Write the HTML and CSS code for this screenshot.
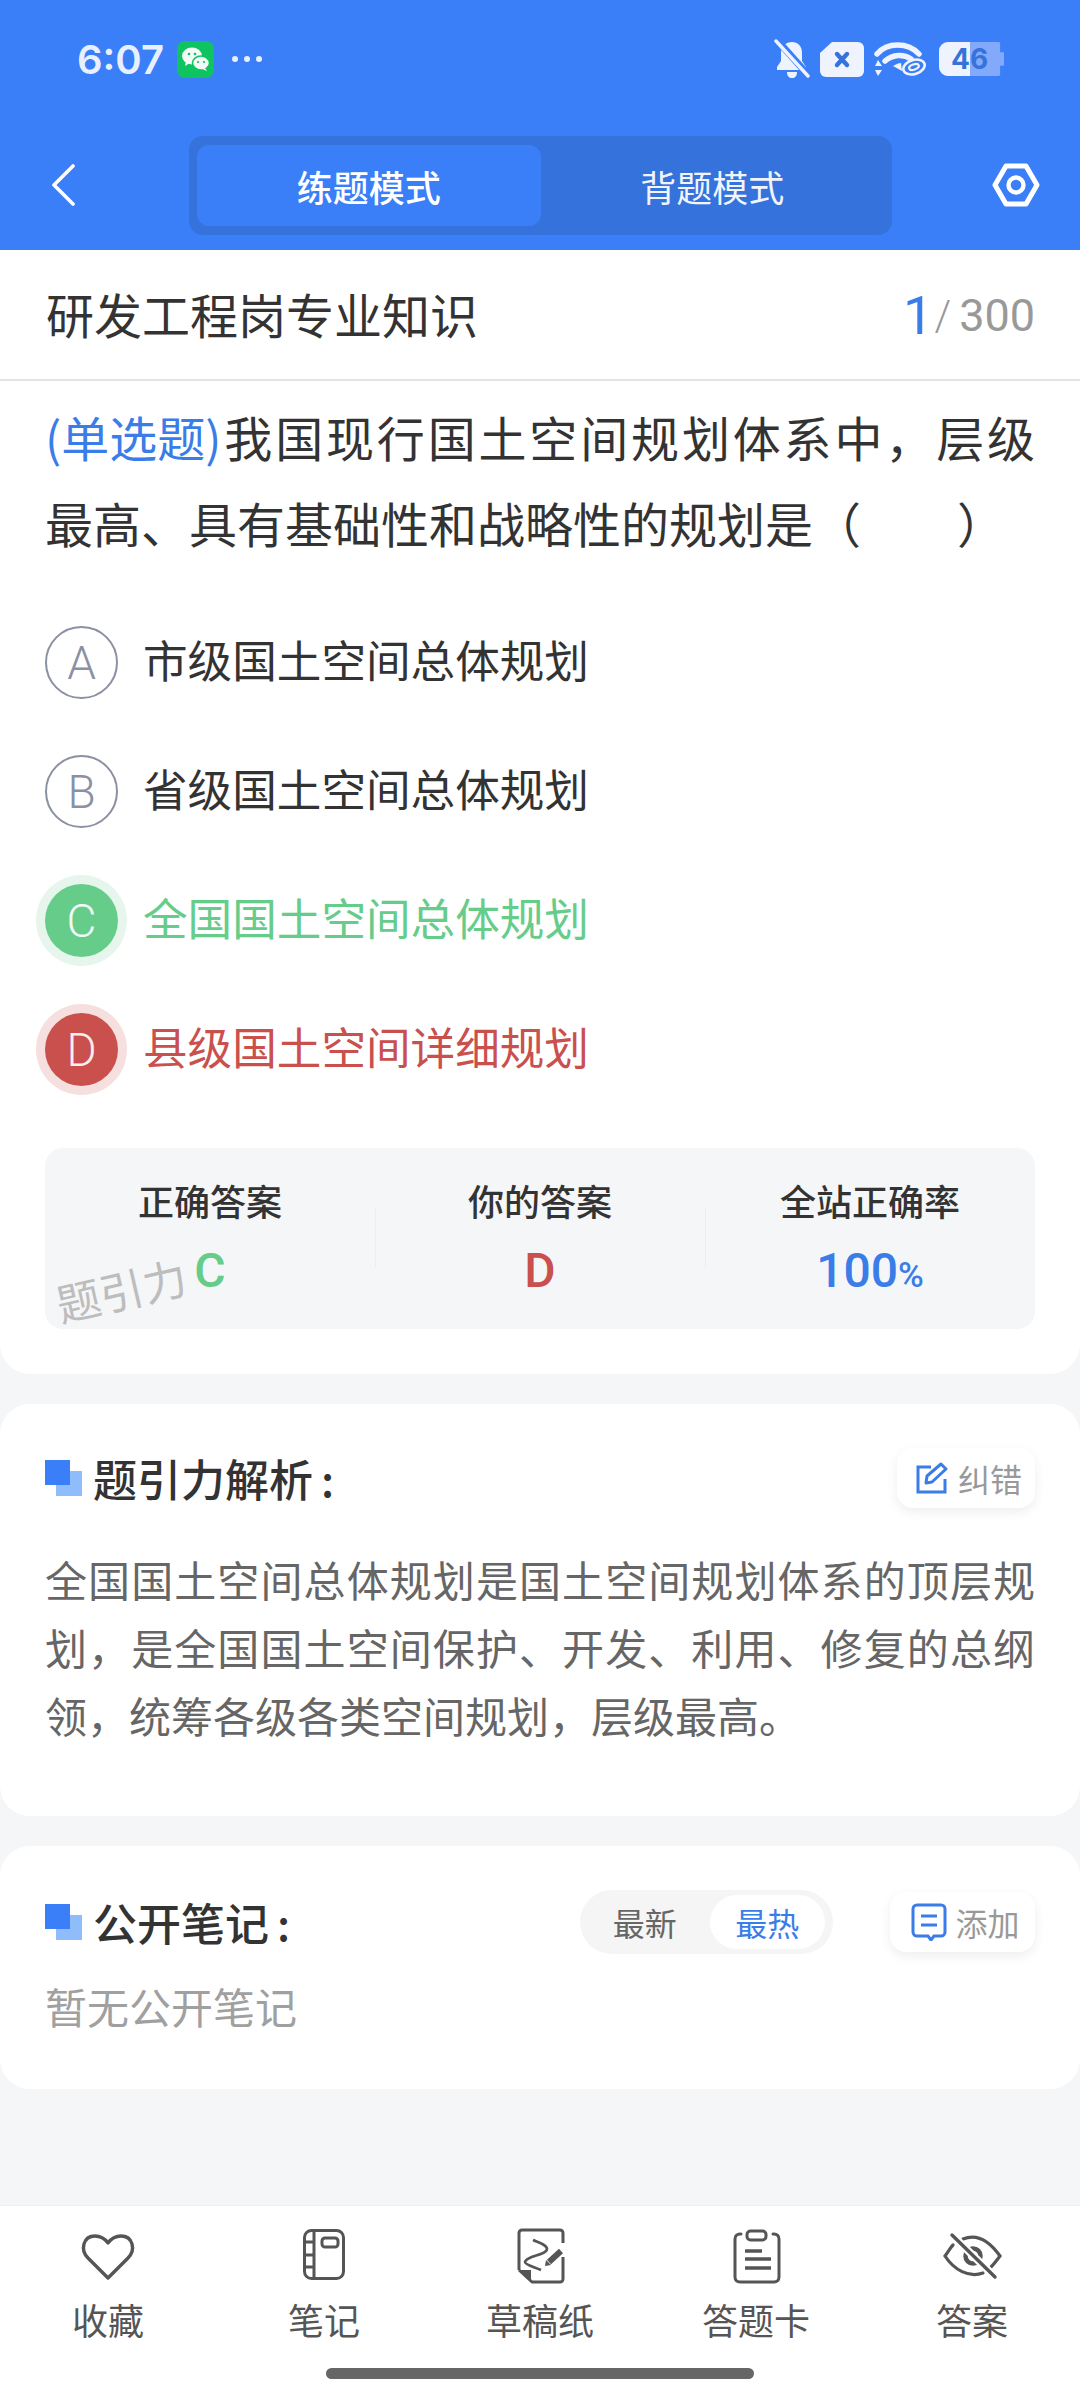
FILE: index.html
```html
<!DOCTYPE html>
<html lang="zh-CN">
<head>
    <meta charset="UTF-8">
    <meta name="viewport" content="width=device-width, initial-scale=1.0">
    <title>练题模式</title>
    <link rel="stylesheet" href="styles.css">
</head>
<body>
    <header class="top">
        <div class="status">
            <div class="status-left">
                <span class="time">6:07</span>
                <svg class="wechat" width="37" height="37" viewBox="0 0 37 37">
                    <rect width="37" height="37" rx="8" fill="#0fc460"/>
                    <ellipse cx="15" cy="15" rx="10" ry="8.5" fill="#f2fbf5"/>
                    <path d="M9 20l-1 5 5-3z" fill="#f2fbf5"/>
                    <ellipse cx="24" cy="22" rx="8.5" ry="7" fill="#f2fbf5" stroke="#0fc460" stroke-width="1.5"/>
                    <path d="M28 27l2 3-5-2z" fill="#f2fbf5"/>
                    <circle cx="12" cy="13" r="1.3" fill="#0fc460"/>
                    <circle cx="18" cy="13" r="1.3" fill="#0fc460"/>
                    <circle cx="21" cy="21" r="1.1" fill="#0fc460"/>
                    <circle cx="27" cy="21" r="1.1" fill="#0fc460"/>
                </svg>
                <div class="dots"><i></i><i></i><i></i></div>
            </div>
            <div class="status-right">
                <svg width="36" height="40" viewBox="0 0 36 40">
                    <path d="M18 3c6 0 10 4 10 11v8l4 6v3H3v-3l4-6v-8c0-7 5-11 11-11z" fill="#eef3fe"/>
                    <path d="M13 33h10c0 4-2 6-5 6s-5-2-5-6z" fill="#eef3fe"/>
                    <path d="M3 1l32 36" stroke="#3b7ff8" stroke-width="7"/>
                    <path d="M2 2l32 35" stroke="#eef3fe" stroke-width="3.4" stroke-linecap="round"/>
                </svg>
                <svg width="44" height="35" viewBox="0 0 44 35">
                    <path d="M12 0h26a6 6 0 0 1 6 6v23a6 6 0 0 1-6 6H6a6 6 0 0 1-6-6V11z" fill="#eef3fe"/>
                    <path d="M17 12l10 11M27 12L17 23" stroke="#3572dc" stroke-width="4.4" stroke-linecap="round"/>
                </svg>
                <svg width="52" height="36" viewBox="0 0 52 36">
                    <path d="M3 13C13 1 34 1 45 13" fill="none" stroke="#eef3fe" stroke-width="5.5" stroke-linecap="round"/>
                    <path d="M11 20c8-7 19-7 26-2" fill="none" stroke="#eef3fe" stroke-width="5.5" stroke-linecap="round"/>
                    <path d="M19 25c3-2 6-3 8-3l1 8z" fill="#eef3fe"/>
                    <path d="M4 19l4 6H1zM4 35l4-6H1z" fill="#eef3fe"/>
                    <ellipse cx="40" cy="26" rx="11" ry="7" transform="rotate(-18 40 26)" fill="none" stroke="#eef3fe" stroke-width="2.6"/>
                    <ellipse cx="40" cy="26" rx="5" ry="2.6" transform="rotate(-18 40 26)" fill="none" stroke="#eef3fe" stroke-width="2.2"/>
                </svg>
                <div class="battery">
                    <div class="battery-fill"></div>
                    <span class="battery-num">46</span>
                </div>
            </div>
        </div>
        <nav class="nav">
            <svg class="back" width="24" height="42" viewBox="0 0 24 42">
                <path d="M22 2L3 21l19 19" fill="none" stroke="#fff" stroke-width="3.6" stroke-linecap="round" stroke-linejoin="round"/>
            </svg>
            <div class="mode-tabs">
                <div class="mode-tab active">练题模式</div>
                <div class="mode-tab">背题模式</div>
            </div>
            <svg class="setting" width="48" height="44" viewBox="0 0 48 44">
                <path d="M14 3h20l11 19-11 19H14L3 22z" fill="none" stroke="#fff" stroke-width="5" stroke-linejoin="round"/>
                <circle cx="24" cy="22" r="7.5" fill="none" stroke="#fff" stroke-width="4.4"/>
            </svg>
        </nav>
    </header>

    <main class="page">
        <section class="card card-question">
            <div class="paper-row">
                <h1 class="paper-title">研发工程岗专业知识</h1>
                <div class="paper-count">
                    <span class="count-now">1</span>
                    <span class="count-slash">/</span>
                    <span class="count-all">300</span>
                </div>
            </div>
            <div class="question-body">
                <p class="question"><span class="q-type">(单选题)</span>我国现行国土空间规划体系中，层级最高、具有基础性和战略性的规划是（　　）</p>
                <div class="options">
                    <div class="option"><span class="opt-mark">A</span><span class="opt-text">市级国土空间总体规划</span></div>
                    <div class="option"><span class="opt-mark">B</span><span class="opt-text">省级国土空间总体规划</span></div>
                    <div class="option right"><span class="opt-mark">C</span><span class="opt-text">全国国土空间总体规划</span></div>
                    <div class="option wrong"><span class="opt-mark">D</span><span class="opt-text">县级国土空间详细规划</span></div>
                </div>
                <div class="answer-box">
                    <div class="answer-col">
                        <div class="answer-label">正确答案</div>
                        <div class="answer-value green">C</div>
                    </div>
                    <div class="answer-col">
                        <div class="answer-label">你的答案</div>
                        <div class="answer-value red">D</div>
                    </div>
                    <div class="answer-col">
                        <div class="answer-label">全站正确率</div>
                        <div class="answer-value blue">100<small>%</small></div>
                    </div>
                    <div class="watermark">题引力</div>
                </div>
            </div>
        </section>

        <section class="card card-analysis">
            <div class="card-head">
                <h2 class="card-title"><span class="title-mark"></span>题引力解析<span class="title-colon">:</span></h2>
                <div class="mini-btn">
                    <svg width="34" height="32" viewBox="0 0 34 32">
                        <path d="M15 5H2v25h27V17" fill="none" stroke="#3b7de8" stroke-width="3"/>
                        <path d="M11 14L25 2l5 5-14 13-6 1z" fill="none" stroke="#3b7de8" stroke-width="3" stroke-linejoin="round"/>
                    </svg>
                    <span>纠错</span>
                </div>
            </div>
            <p class="analysis-text">全国国土空间总体规划是国土空间规划体系的顶层规划，是全国国土空间保护、开发、利用、修复的总纲领，统筹各级各类空间规划，层级最高。</p>
        </section>

        <section class="card card-notes">
            <div class="card-head">
                <h2 class="card-title"><span class="title-mark"></span>公开笔记<span class="title-colon">:</span></h2>
                <div class="notes-tools">
                    <div class="sort-switch">
                        <span class="sort-item">最新</span>
                        <span class="sort-item active">最热</span>
                    </div>
                    <div class="mini-btn">
                        <svg width="36" height="38" viewBox="0 0 36 38">
                            <path d="M6 2h24a4 4 0 0 1 4 4v23a4 4 0 0 1-4 4h-7l-3 4-3-4H6a4 4 0 0 1-4-4V6a4 4 0 0 1 4-4z" fill="none" stroke="#3b7de8" stroke-width="3"/>
                            <path d="M10 13h16M10 22h16" stroke="#3b7de8" stroke-width="3"/>
                        </svg>
                        <span>添加</span>
                    </div>
                </div>
            </div>
            <p class="notes-empty">暂无公开笔记</p>
        </section>
    </main>

    <footer class="toolbar">
        <div class="tools">
            <div class="tool">
                <svg width="60" height="56" viewBox="0 0 60 56">
                    <path d="M30 50L10 30C2 22 5 8 17 8c6 0 10 3 13 7 3-4 7-7 13-7 12 0 15 14 7 22z" fill="none" stroke="#555" stroke-width="3.4" stroke-linejoin="round"/>
                </svg>
                <span>收藏</span>
            </div>
            <div class="tool">
                <svg width="60" height="56" viewBox="0 0 60 56">
                    <rect x="10.5" y="2.5" width="39" height="48" rx="7" fill="none" stroke="#555" stroke-width="3"/>
                    <path d="M20 2.5v48M10.5 14h9.5M10.5 27h9.5M10.5 39h9.5" stroke="#555" stroke-width="3"/>
                    <rect x="28" y="10" width="16" height="9" rx="3" fill="none" stroke="#555" stroke-width="3"/>
                </svg>
                <span>笔记</span>
            </div>
            <div class="tool">
                <svg width="60" height="56" viewBox="0 0 60 56">
                    <path d="M9 42V5a3 3 0 0 1 3-3h38a3 3 0 0 1 3 3v10M53 29v22a3 3 0 0 1-3 3H22L9 42" fill="none" stroke="#555" stroke-width="3" stroke-linejoin="round"/>
                    <path d="M9 42h12v12z" fill="#555"/>
                    <path d="M23 12c7 3 14 5 14 9 0 6-21 7-22 13 0 3 10 5 16 8" fill="none" stroke="#555" stroke-width="2.6"/>
                    <path d="M39 34l12-11" stroke="#555" stroke-width="6"/>
                    <path d="M35 38l1-6 5 5z" fill="#555"/>
                </svg>
                <span>草稿纸</span>
            </div>
            <div class="tool">
                <svg width="60" height="56" viewBox="0 0 60 56">
                    <path d="M15 6h-1c-3 0-5 2-5 5v38c0 3 2 5 5 5h34c3 0 5-2 5-5V11c0-3-2-5-5-5h-1" fill="none" stroke="#555" stroke-width="3" stroke-linecap="round"/>
                    <rect x="21" y="3" width="19" height="9" rx="3.5" fill="none" stroke="#555" stroke-width="3"/>
                    <path d="M19 23h17M19 31h26M19 40h26" stroke="#555" stroke-width="3.6"/>
                </svg>
                <span>答题卡</span>
            </div>
            <div class="tool">
                <svg width="60" height="56" viewBox="0 0 60 56">
                    <path d="M21 11c12-5 25 0 37 17-3 4-6 8-9 11M11 17c-3 3-5 7-8 11 9 14 24 22 38 17" fill="none" stroke="#555" stroke-width="3.2" stroke-linecap="round"/>
                    <circle cx="31" cy="28" r="7.5" fill="none" stroke="#555" stroke-width="4.5"/>
                    <path d="M10 7l43 42" stroke="#fff" stroke-width="8"/>
                    <path d="M10 7l43 42" stroke="#555" stroke-width="3.4" stroke-linecap="round"/>
                </svg>
                <span>答案</span>
            </div>
        </div>
        <div class="home-bar"></div>
    </footer>
</body>
</html>
```

FILE: styles.css
```css
* {
    box-sizing: border-box;
}

html, body {
    margin: 0;
    padding: 0;
}

body {
    width: 1080px;
    height: 2400px;
    display: flex;
    flex-direction: column;
    overflow: hidden;
    background-color: #f5f6f8;
    color: #333;
    font-family: "Noto Sans CJK SC", "Noto Sans", sans-serif;
}

h1, h2, p {
    margin: 0;
    font-weight: 400;
}

/* Header */
.top {
    height: 250px;
    background-color: #3b7ff8;
    color: #fff;
}

.status {
    height: 136px;
    padding: 40px 76px 0 77px;
    display: flex;
    align-items: flex-start;
    justify-content: space-between;
}

.status-left,
.status-right {
    display: flex;
    align-items: center;
    height: 38px;
}

.time {
    font-family: Inter, Roboto, sans-serif;
    font-size: 40px;
    font-weight: 600;
    color: #e8effe;
    width: 100px;
}

.dots {
    display: flex;
    gap: 6px;
    margin-left: 18px;
}

.dots i {
    width: 6px;
    height: 6px;
    border-radius: 50%;
    background: #e8effe;
}

.status-right {
    gap: 10px;
}

.battery {
    position: relative;
    width: 65px;
    height: 34px;
    margin-left: 3px;
    border-radius: 9px 6px 6px 9px;
    background: #83aafa;
    overflow: hidden;
    clip-path: polygon(0 0, 94% 0, 94% 30%, 100% 30%, 100% 70%, 94% 70%, 94% 100%, 0 100%);
}

.battery-fill {
    width: 31px;
    height: 100%;
    background: #eef3fe;
}

.battery-num {
    position: absolute;
    left: 12px;
    top: 0;
    font-family: Inter, Roboto, sans-serif;
    font-size: 28px;
    font-weight: 700;
    line-height: 34px;
    color: #3572dc;
}

.nav {
    height: 99px;
    padding: 0 41px 0 51px;
    display: flex;
    align-items: center;
    justify-content: space-between;
}

.mode-tabs {
    width: 703px;
    height: 99px;
    margin-left: 114px;
    margin-right: 100px;
    padding: 9px 8px;
    display: flex;
    flex-shrink: 0;
    border-radius: 14px;
    background-color: #3572dc;
}

.mode-tab {
    flex: 1;
    display: flex;
    align-items: center;
    justify-content: center;
    border-radius: 12px;
    font-size: 36px;
    color: #f0f4fe;
}

.mode-tab.active {
    background-color: #3b7ff8;
    color: #fff;
    font-weight: 500;
}

.back,
.setting {
    flex-shrink: 0;
    margin-bottom: 2px;
}

/* Cards */
.page {
    flex: 1;
    display: flex;
    flex-direction: column;
    gap: 30px;
}

.card {
    background: #fff;
    border-radius: 30px;
    padding: 0 45px;
}

.card-question {
    height: 1124px;
    padding: 0;
    border-radius: 0 0 30px 30px;
}

.paper-row {
    height: 131px;
    padding: 0 45px 4px 46px;
    display: flex;
    align-items: center;
    justify-content: space-between;
    border-bottom: 2px solid #e4e4e4;
}

.paper-title {
    font-size: 48px;
    color: #333;
}

.paper-count {
    display: flex;
    align-items: center;
    padding-top: 6px;
    font-family: Roboto, sans-serif;
    line-height: 1;
}

.count-now {
    font-size: 54px;
    color: #3b7de8;
    margin-right: 1px;
}

.count-slash {
    font-size: 42px;
    font-weight: 300;
    color: #999;
    margin-right: 8px;
}

.count-all {
    font-size: 45px;
    color: #999;
}

.question-body {
    padding: 12px 45px 0;
}

.question {
    font-size: 48px;
    line-height: 86px;
    text-align: justify;
    color: #333;
}

.q-type {
    display: inline-block;
    color: #3b7de8;
}

.options {
    margin-top: 61px;
    display: flex;
    flex-direction: column;
    gap: 56px;
}

.option {
    height: 73px;
    display: flex;
    align-items: center;
    gap: 25px;
    font-size: 44.6px;
    color: #333;
}

.opt-text {
    margin-bottom: 8px;
}

.opt-mark {
    width: 73px;
    height: 73px;
    flex-shrink: 0;
    display: flex;
    align-items: center;
    justify-content: center;
    border: 2px solid #8b90a3;
    border-radius: 50%;
    font-family: Roboto, sans-serif;
    font-size: 46px;
    font-weight: 300;
    color: #8b90a3;
}

.option.right {
    color: #66cc8a;
}

.option.right .opt-mark {
    border: none;
    background: #66cc8a;
    color: #f0faf4;
    box-shadow: 0 0 0 9px #e6f6ec;
}

.option.wrong {
    color: #c9504d;
}

.option.wrong .opt-mark {
    border: none;
    background: #c9504d;
    color: #fbeeee;
    box-shadow: 0 0 0 9px #f5e0df;
}

/* Answer summary */
.answer-box {
    position: relative;
    height: 181px;
    margin-top: 62px;
    display: grid;
    grid-template-columns: repeat(3, 1fr);
    border-radius: 18px;
    background: #f5f6f8;
}

.answer-col {
    position: relative;
    padding-top: 26px;
    text-align: center;
}

.answer-col + .answer-col::before {
    content: "";
    position: absolute;
    left: 0;
    top: 60px;
    height: 60px;
    width: 1px;
    background: #eceef0;
}

.answer-label {
    font-size: 36px;
    line-height: 52px;
    font-weight: 500;
    color: #333;
}

.answer-value {
    margin-top: 17px;
    font-family: Roboto, sans-serif;
    font-size: 48px;
    line-height: 56px;
    font-weight: 500;
}

.answer-value small {
    font-size: 35px;
}

.green { color: #66cc8a; }
.red { color: #c9504d; }
.blue { color: #3b7de8; }

.watermark {
    position: absolute;
    left: 10px;
    top: 116px;
    font-size: 44px;
    line-height: 50px;
    color: #bdbdbd;
    transform: rotate(-13deg);
}

.card-analysis {
    height: 412px;
    padding-top: 42px;
}

.card-notes {
    height: 243px;
    padding-top: 44px;
}

.card-head {
    display: flex;
    align-items: center;
    justify-content: space-between;
}

.card-title {
    display: flex;
    align-items: center;
    font-size: 44px;
    font-weight: 500;
    color: #333;
}

.title-colon {
    margin-left: 8px;
}

.title-mark {
    width: 37px;
    height: 36px;
    margin-right: 11px;
    background: linear-gradient(#3b7ff8, #3b7ff8) 0 0 / 25px 25px no-repeat,
                linear-gradient(#8fbcfb, #8fbcfb) 100% 100% / 26px 25px no-repeat;
}

.mini-btn {
    width: 138px;
    height: 60px;
    padding-left: 6px;
    display: flex;
    align-items: center;
    justify-content: center;
    gap: 8px;
    border-radius: 16px;
    background: #fff;
    box-shadow: 0 4px 12px rgba(0, 0, 0, 0.07);
    font-size: 32px;
    color: #999;
}

.analysis-text {
    margin-top: 35px;
    font-size: 42px;
    line-height: 68px;
    text-align: justify;
    color: #666;
}

.notes-tools {
    display: flex;
    align-items: center;
    gap: 57px;
}

.notes-tools .mini-btn {
    width: 145px;
}

.sort-switch {
    width: 253px;
    height: 64px;
    padding: 5px 8px 5px 0;
    display: flex;
    align-items: center;
    justify-content: space-between;
    border-radius: 32px;
    background: #f5f5f5;
    font-size: 32px;
    color: #666;
}

.sort-item {
    width: 118px;
    height: 54px;
    margin-left: 7px;
    display: flex;
    align-items: center;
    justify-content: center;
    border-radius: 27px;
}

.sort-item.active {
    background: #fff;
    color: #3b7de8;
}

.notes-empty {
    margin-top: 22px;
    font-size: 42px;
    line-height: 60px;
    color: #a0a0a0;
}

/* Bottom bar */
.toolbar {
    height: 195px;
    background: #fff;
    border-top: 1px solid #eeeff1;
}

.tools {
    display: grid;
    grid-template-columns: repeat(5, 1fr);
    padding-top: 22px;
}

.tool {
    display: flex;
    flex-direction: column;
    align-items: center;
    font-size: 36px;
    line-height: 50px;
    color: #555;
}

.tool span {
    margin-top: 10px;
}

.home-bar {
    width: 428px;
    height: 11px;
    margin: 24px auto 0;
    border-radius: 6px;
    background: #666;
}
```
